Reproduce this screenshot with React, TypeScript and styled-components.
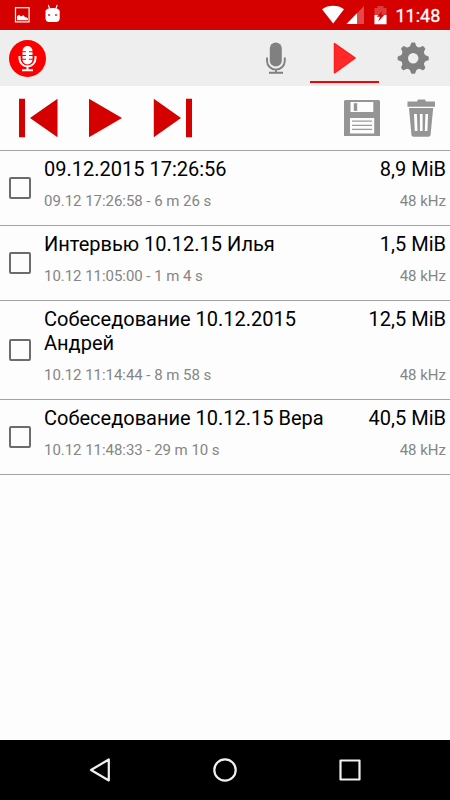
import React from 'react';
import styled, { createGlobalStyle } from 'styled-components';

const GlobalStyle = createGlobalStyle`
  * {
    box-sizing: border-box;
  }

  body {
    margin: 0;
    background: #fdfdfd;
    font-family: Roboto, 'Liberation Sans', sans-serif;
  }

  svg {
    display: block;
    flex: none;
  }
`;

const Screen = styled.div`
  display: flex;
  flex-direction: column;
  width: 450px;
  height: 800px;
  overflow: hidden;
  background: #fdfdfd;
`;

const StatusBar = styled.div`
  display: flex;
  justify-content: space-between;
  flex: none;
  height: 30px;
  background: #d50000;
`;

const Clock = styled.span`
  width: 55px;
  padding-left: 0.5px;
  font-size: 18px;
  line-height: 31px;
  color: #fff;
  -webkit-text-stroke: 0.3px #fff;
`;

const StatusGroup = styled.div`
  display: flex;
`;

const AppBar = styled.header`
  display: flex;
  justify-content: space-between;
  flex: none;
  height: 56px;
  padding: 0 2px 0 9px;
  background: #eeeeee;
  border-top: 1px solid #f8fafa;
`;

const Logo = styled.div`
  display: flex;
  align-items: center;
`;

const Tabs = styled.nav`
  display: flex;
`;

const Tab = styled.div<{ $active?: boolean }>`
  display: flex;
  justify-content: center;
  width: 69px;
  height: 52px;
  border-bottom: 2px solid ${(props) => (props.$active ? '#fa0000' : 'transparent')};
`;

const Player = styled.div`
  display: flex;
  justify-content: space-between;
  flex: none;
  height: 65px;
  border-bottom: 1px solid #a3a3a3;
`;

const List = styled.div`
  flex: 1;
`;

const Row = styled.div`
  display: flex;
  align-items: center;
  padding: 6px 4px 15px 9px;
  border-bottom: 1px solid #a3a3a3;
`;

const Checkbox = styled.div`
  flex: none;
  width: 22px;
  height: 22px;
  margin: 9px 13px 0 0;
  border: 2px solid #6c6c6c;
  border-radius: 2px;
`;

const Details = styled.div`
  display: grid;
  grid-template-columns: 285px 1fr;
  row-gap: 11px;
  flex: 1;
`;

const Title = styled.div<{ $right?: boolean }>`
  font-size: 20px;
  line-height: 24px;
  color: #000;
  text-align: ${(props) => (props.$right ? 'right' : 'left')};
`;

const Meta = styled.div<{ $right?: boolean }>`
  font-size: 15px;
  line-height: 18px;
  letter-spacing: ${(props) => (props.$right ? '0' : '-0.04px')};
  color: #858585;
  text-align: ${(props) => (props.$right ? 'right' : 'left')};
`;

const NavBar = styled.div`
  display: flex;
  justify-content: center;
  flex: none;
  height: 60px;
  background: #000;
`;

const records = [
  { title: '09.12.2015 17:26:56', info: '09.12 17:26:58 - 6 m 26 s', size: '8,9 MiB' },
  { title: 'Интервью 10.12.15 Илья', info: '10.12 11:05:00 - 1 m 4 s', size: '1,5 MiB' },
  { title: 'Собеседование 10.12.2015 Андрей', info: '10.12 11:14:44 - 8 m 58 s', size: '12,5 MiB' },
  { title: 'Собеседование 10.12.15 Вера', info: '10.12 11:48:33 - 29 m 10 s', size: '40,5 MiB' },
];

const Notifications = () => (
  <svg width="70" height="30" viewBox="0 0 70 30">
    <rect x="15.5" y="7.7" width="13.6" height="14.2" fill="none" stroke="#fff" strokeWidth="1.2" />
    <path d="M17 20.3v-4l2-1.6 2 1.7 2.3-1.2 1.9 2h1.3l1.4 1.2v1.9z" fill="#fff" />
    <path d="M45.5 10.5h14.2v8.5l-1 2.3-2.3.6h-8l-2.200-.8-.7-2.600z" fill="#fff" />
    <path d="M48.3 5l1.400 4M57.200 5l-1.400 4" stroke="#fff" strokeWidth="1.1" />
    <path d="M45.7 11c.5-2 2.500-3 6.900-3s6.400 1 6.900 3z" fill="#fff" />
    <path d="M48 14h2.200v2H48zM55 14h2.200v2H55z" fill="#df6060" />
  </svg>
);

const Signals = () => (
  <svg width="75" height="30" viewBox="0 0 75 30">
    <path d="M2 9.2C8.5 4.7 17.8 4.7 24 9.2L13.2 23.5z" fill="#fff" />
    <path d="M44 6v18H26.5z" fill="#e24a4a" />
    <path d="M37 13.2V24H26.5z" fill="#fff" />
    <path d="M57.5 6h6v2h3v16.2h-12V8h3z" fill="#df3c3c" />
    <path d="M54.5 15h12v9.2h-12z" fill="#fff" />
    <path d="M62.8 10.5l-6 6.3h3.2l-1.8 5 6.2-7.1h-3.2z" fill="#d50000" />
  </svg>
);

const LogoIcon = () => (
  <svg width="37" height="38" viewBox="0 0 37 38">
    <circle cx="18.5" cy="18.5" r="18.5" fill="#fa0000" />
    <rect x="13.5" y="6" width="10" height="18.5" rx="5" fill="#fff" />
    <path d="M13 11.7h4M20 11.7h4M13 15.5h4M20 15.5h4M13 19.3h4M20 19.3h4" stroke="#fa0000" strokeWidth="1.1" />
    <path d="M10.5 16v2.5a8 8 0 0 0 16 0V16M18.5 26.5v4M13 30.3h11" fill="none" stroke="#fff" strokeWidth="2" />
  </svg>
);

const MicIcon = () => (
  <svg width="69" height="50" viewBox="0 0 69 50">
    <rect x="28.8" y="11.5" width="12" height="24" rx="6" fill="#808080" />
    <path d="M26 26.5v3.2a8.9 8.9 0 0 0 17.8 0v-3.2M35 38.5v3M28 41.7h14" fill="none" stroke="#808080" strokeWidth="1.9" />
  </svg>
);

const PlayTabIcon = () => (
  <svg width="69" height="50" viewBox="0 0 69 50">
    <path d="M24.5 12.5L45.2 27 24.5 41.8z" fill="#ff2828" stroke="#ff1c1c" strokeWidth="1.5" strokeLinejoin="round" />
  </svg>
);

const GearIcon = () => (
  <svg width="69" height="50" viewBox="0 0 69 50">
    <g fill="#808080" transform="translate(34.2 27.2)">
      {[0, 45, 90, 135, 180, 225, 270, 315].map((angle) => (
        <path
          key={angle}
          d="M-5.2-10.5Q-2.8-11.2-2.3-14.2Q-2.2-15.6-1-15.6H1Q2.2-15.6 2.3-14.2Q2.8-11.2 5.2-10.5L4-4H-4z"
          transform={`rotate(${angle})`}
        />
      ))}
      <circle r="11.8" />
    </g>
    <circle cx="34.2" cy="27.2" r="5.2" fill="#eee" />
  </svg>
);

const Transport = () => (
  <svg width="210" height="64" viewBox="0 0 210 64">
    <g fill="#d50000">
      <path d="M19 12.8h6v38.4h-6zM57.5 12.8v38.4L30 32z" />
      <path d="M89 12.8v38.4L122 32z" />
      <path d="M153.8 12.8v38.4L181 32zM186 12.8h6v38.4h-6z" />
    </g>
  </svg>
);

const FileActions = () => (
  <svg width="120" height="64" viewBox="0 0 120 64">
    <path d="M15 14h34l1 1v35H14V15z" fill="#959595" />
    <path d="M20.5 16h22.8v10H20.5zM20 32h24.2v15.5H20z" fill="#fdfdfd" />
    <path d="M23.8 17.2h3.4v7.7h-3.4z" fill="#959595" />
    <path d="M22 35.2h20M22 39.3h20M22 43.4h20" stroke="#9b9b9b" strokeWidth="1.3" />
    <path d="M77.5 15.6H87l1-2h7l1 2h9v5.2H77.5z" fill="#959595" />
    <path d="M79 22h24.2l-2.7 27.5-1.5 1.3H83l-1.5-1.3z" fill="#959595" />
    <path d="M84 28h2.9l.6 17h-2.7zM89.9 28h2.7v17h-2.7zM95.4 28h2.7l-.7 17h-2.6z" fill="#fdfdfd" />
  </svg>
);

const NavButtons = () => (
  <svg width="310" height="60" viewBox="0 0 310 60" fill="none" stroke="#f0f0f0" strokeWidth="2.2" strokeLinejoin="round">
    <path d="M38.8 19.5v21L21 30z" />
    <circle cx="155" cy="30" r="10.7" />
    <rect x="270.5" y="20.5" width="19" height="19" />
  </svg>
);

const App = () => {
  return (
    <Screen>
      <GlobalStyle />
      <StatusBar>
        <Notifications />
        <StatusGroup>
          <Signals />
          <Clock>11:48</Clock>
        </StatusGroup>
      </StatusBar>
      <AppBar>
        <Logo>
          <LogoIcon />
        </Logo>
        <Tabs>
          <Tab>
            <MicIcon />
          </Tab>
          <Tab $active>
            <PlayTabIcon />
          </Tab>
          <Tab>
            <GearIcon />
          </Tab>
        </Tabs>
      </AppBar>
      <Player>
        <Transport />
        <FileActions />
      </Player>
      <List>
        {records.map((record) => (
          <Row key={record.title}>
            <Checkbox />
            <Details>
              <Title>{record.title}</Title>
              <Title $right>{record.size}</Title>
              <Meta>{record.info}</Meta>
              <Meta $right>48 kHz</Meta>
            </Details>
          </Row>
        ))}
      </List>
      <NavBar>
        <NavButtons />
      </NavBar>
    </Screen>
  );
};

export default App;
